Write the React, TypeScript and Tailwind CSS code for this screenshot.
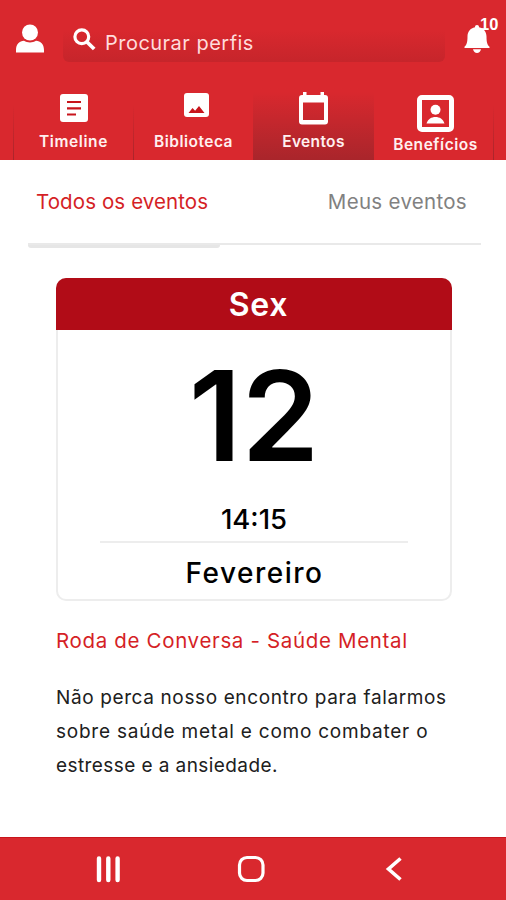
import type { ReactNode } from 'react';

type Tab = { label: string; icon: ReactNode; active?: boolean; labelClass: string; iconClass: string };

function UserIcon() {
  return (
    <svg className="w-7 h-[29px]" viewBox="0 0 28 29" fill="white">
      <circle cx="14" cy="8.500" r="8" />
      <path d="M0 28.500V26c0-6 3.500-9 8-9.300 3.600 2.300 8.400 2.300 12 0 4.500.3 8 3.300 8 9.300v2.500z" />
    </svg>
  );
}

function SearchIcon() {
  return (
    <svg className="w-[23px] h-[23px]" viewBox="0 0 23 23" fill="none" stroke="white">
      <circle cx="8.800" cy="8.800" r="6.900" strokeWidth="3.200" />
      <path d="M14 14l7.200 7" strokeWidth="3.800" />
    </svg>
  );
}

function BellIcon() {
  return (
    <svg className="w-[26px] h-[29px]" viewBox="0 0 26 29" fill="white">
      <path d="M13 0c1.300 0 2 .8 2 2.200 4.700 1 7.500 4.500 7.500 9.300 0 5.500.8 8.500 3 10.300V23H.5v-1.200c2.200-1.800 3-4.800 3-10.300C3.500 6.700 6.300 3.200 11 2.200 11 .8 11.700 0 13 0z" />
      <path d="M9 24.300h8c-.5 2.300-2 3.700-4 3.700s-3.500-1.400-4-3.700z" />
    </svg>
  );
}

const TABS: Tab[] = [
  {
    label: 'Timeline',
    iconClass: 'top-[14px] left-[47px]',
    labelClass: 'text-[15.500px] tracking-[0.600px] pt-[52px] pl-px',
    icon: (
      <svg className="w-7 h-7" viewBox="0 0 28 28">
        <rect width="28" height="28" rx="3" fill="white" />
        <path d="M7 8h14M7 14.300h14M7 20.500h9" stroke="#c8151c" strokeWidth="2.200" />
      </svg>
    ),
  },
  {
    label: 'Biblioteca',
    iconClass: 'top-[13px] left-[51px]',
    labelClass: 'text-[15.500px] tracking-[0.500px] pt-[52px] pl-px',
    icon: (
      <svg className="w-[25px] h-6" viewBox="0 0 25 24">
        <rect width="25" height="24" rx="3" fill="white" />
        <path d="M4.500 20l4-5 2.600 2.800L15 13l5.500 7z" fill="#c8151c" />
      </svg>
    ),
  },
  {
    label: 'Eventos',
    active: true,
    iconClass: 'top-[12px] left-[46px]',
    labelClass: 'text-[15.500px] tracking-[0.350px] pt-[52px]',
    icon: (
      <svg className="w-[29px] h-[33px]" viewBox="0 0 29 33">
        <path
          fill="white"
          fillRule="evenodd"
          d="M4 0h3.500v3h14V0H25v3h1a3 3 0 013 3v23.500a3 3 0 01-3 3H3a3 3 0 01-3-3V6a3 3 0 013-3h1zM4 10.500v17.500h21v-17.500z"
        />
      </svg>
    ),
  },
  {
    label: 'Benefícios',
    iconClass: 'top-[15px] left-[43px]',
    labelClass: 'text-[15.500px] tracking-[0.550px] pt-[55px] pl-[3px]',
    icon: (
      <svg className="w-[37px] h-[37px]" viewBox="0 0 37 37">
        <rect x="2.500" y="2.500" width="32" height="32" rx="2.500" fill="none" stroke="white" strokeWidth="5" />
        <circle cx="18.500" cy="14.800" r="5" fill="white" />
        <path d="M9.500 28.500c1.500-4.500 5-6.500 9-6.500s7.500 2 9 6.500z" fill="white" />
      </svg>
    ),
  },
];

const DESCRIPTION = [
  { text: 'Não perca nosso encontro para falarmos', className: 'tracking-[0.620px]' },
  { text: 'sobre saúde metal e como combater o', className: 'tracking-[0.770px]' },
  { text: 'estresse e a ansiedade.', className: 'tracking-[0.420px]' },
];

function TabBar() {
  return (
    <nav className="flex h-20 pl-[13px]">
      {TABS.map((tab) => (
        <div
          key={tab.label}
          className={
            tab.active
              ? 'relative w-[121px] text-center bg-linear-to-b from-[#d9282e] from-15% to-[#a9252b]'
              : 'relative w-[120px] text-center'
          }
        >
          {!tab.active && tab.label !== 'Benefícios' && (
            <span className="absolute left-0 bottom-0 w-px h-14 bg-linear-to-b from-transparent to-[#a9252b]" />
          )}
          {tab.label === 'Benefícios' && (
            <span className="absolute right-0 bottom-0 w-px h-14 bg-linear-to-b from-transparent to-[#a9252b]" />
          )}
          <span className={`absolute ${tab.iconClass}`}>{tab.icon}</span>
          <div className={`font-semibold text-[#fff0f0] leading-5 whitespace-nowrap ${tab.labelClass}`}>{tab.label}</div>
        </div>
      ))}
    </nav>
  );
}

export default function App() {
  return (
    <div className="flex flex-col w-[506px] h-[900px] overflow-hidden bg-white text-black font-['Inter',sans-serif]">
      <header className="h-40 bg-[#d9282e] shrink-0">
        <div className="flex h-20 pl-4">
          <div className="pt-[24px] w-[47px]">
            <UserIcon />
          </div>
          <div className="flex w-[382px] h-[38px] mt-6 rounded-md bg-linear-to-b from-[#d9282e] from-15% to-[#c6252b]">
            <div className="pl-[10px] pt-[4px] w-[42px]">
              <SearchIcon />
            </div>
            <span className="text-[20px] leading-[38px] tracking-[0.480px] text-[#ffdcdc] whitespace-nowrap">Procurar perfis</span>
          </div>
          <div className="relative pl-[19px] pt-[25px]">
            <BellIcon />
            <span className="absolute left-[35px] top-[16px] text-[16.500px] leading-4 font-bold text-white font-['Liberation_Sans',sans-serif]">10</span>
          </div>
        </div>
        <TabBar />
      </header>

      <main className="flex-1">
        <div className="flex justify-between pt-[30px] pl-9 pr-[39px] text-[20.500px] leading-6 whitespace-nowrap">
          <span className="text-[#d51f26] tracking-[0.100px]">Todos os eventos</span>
          <span className="text-[#818181] tracking-[0.300px]">Meus eventos</span>
        </div>
        <div className="mt-[29px] ml-7 w-[453px] h-[5px]">
          <div className="h-[2px] bg-[#e9e9e9]" />
          <div className="h-[3px] w-[192px] rounded-b bg-[#e6e6e6]" />
        </div>

        <section className="mt-[30px] ml-14 w-[396px] h-[323px] rounded-[10px] border-2 border-[#ededed]">
          <div className="-mx-[2px] -mt-[2px] h-[52px] pl-[9px] rounded-t-[10px] bg-[#b10c17] text-white text-center text-[32px] leading-[53px] font-semibold tracking-[0.800px]">
            Sex
          </div>
          <div className="pt-[26px] h-[176px] text-center text-[125px] leading-[120px] font-semibold">12</div>
          <div className="-mt-[1px] text-center text-[27.500px] leading-[28px] font-medium">14:15</div>
          <div className="mx-auto mt-[8px] w-[308px] h-[2px] bg-[#ededed]" />
          <div className="mt-[15px] pl-px text-center text-[28px] leading-[30px] font-medium tracking-[1.500px]">Fevereiro</div>
        </section>

        <div className="pl-14 whitespace-nowrap">
          <h2 className="mt-[28px] text-[20.500px] leading-6 text-[#d51f26] tracking-[0.660px]">Roda de Conversa - Saúde Mental</h2>
          <div className="mt-[28px] text-[19px] leading-[34.200px] text-[#202020]">
            {DESCRIPTION.map((line) => (
              <p key={line.text} className={line.className}>
                {line.text}
              </p>
            ))}
          </div>
        </div>
      </main>

      <footer className="h-[63px] shrink-0 bg-[#d9282e] border-t border-[#c8151c]">
        <svg className="w-[506px] h-[62px]" viewBox="0 0 506 62" fill="none" stroke="white">
          <path d="M99 20.500v21.500M108.300 20.500v21.500M117.600 20.500v21.500" strokeWidth="4.400" strokeLinecap="round" />
          <rect x="239.500" y="19.500" width="23.500" height="23" rx="7.500" strokeWidth="3.200" />
          <path d="M400.500 20.500L388.500 31l12 10.500" strokeWidth="3.600" />
        </svg>
      </footer>
    </div>
  );
}
